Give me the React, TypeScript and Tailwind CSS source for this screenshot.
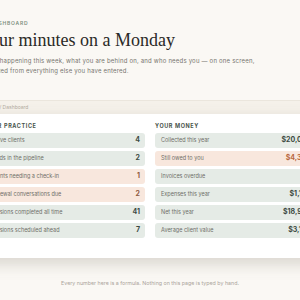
const practice = [
  { label: "Active clients", value: "4", warn: false },
  { label: "Leads in the pipeline", value: "2", warn: false },
  { label: "Clients needing a check-in", value: "1", warn: true },
  { label: "Renewal conversations due", value: "2", warn: true },
  { label: "Sessions completed all time", value: "41", warn: false },
  { label: "Sessions scheduled ahead", value: "7", warn: false },
];

const money = [
  { label: "Collected this year", value: "$20,050", warn: false },
  { label: "Still owed to you", value: "$4,300", warn: true },
  { label: "Invoices overdue", value: "0", warn: false },
  { label: "Expenses this year", value: "$1,120", warn: false },
  { label: "Net this year", value: "$18,930", warn: false },
  { label: "Average client value", value: "$3,150", warn: false },
];

type Item = { label: string; value: string; warn: boolean };

function StatRow({ item, money }: { item: Item; money?: boolean }) {
  return (
    <div
      className={`flex h-[15px] items-center justify-between rounded-[3px] pl-[6px] pr-[5px] ${
        item.warn ? "bg-[#f8e7dd]" : "bg-[#e5ebe6]"
      }`}
    >
      <span className="text-[5.5px] text-[#6f6f68]">{item.label}</span>
      <span
        className={`text-[7px] font-bold ${
          item.warn ? (money ? "text-[#b8683f]" : "text-[#8f5a3e]") : "text-[#3c4a42]"
        }`}
      >
        {item.value}
      </span>
    </div>
  );
}

function Column({ title, items, money }: { title: string; items: Item[]; money?: boolean }) {
  return (
    <div className="flex w-[161px] flex-col">
      <div className="mb-[3px] h-[8px] text-[5.5px] font-bold uppercase leading-[8px] tracking-[0.6px] text-[#48534c]">
        {title}
      </div>
      <div className="flex flex-col gap-[3px]">
        {items.map((it) => (
          <StatRow key={it.label} item={it} money={money} />
        ))}
      </div>
    </div>
  );
}

export default function App() {
  return (
    <div
      className="h-[300px] overflow-hidden bg-[#faf8f4]"
      style={{ fontFamily: "Inter, 'Liberation Sans', sans-serif" }}
    >
      <div className="flex justify-center">
        <div className="flex w-[420px] shrink-0 flex-col items-center">
          <div className="w-[336px] pt-[19px]">
            <div className="-ml-[4px] text-[5px] font-semibold uppercase leading-[8px] tracking-[0.8px] text-[#7d8f80]">
              My dashboard
            </div>
            <h1
              className="mt-[1px] -ml-[2px] text-[18px] leading-[24px] text-[#2a2a27]"
              style={{ fontFamily: "'Liberation Serif', serif" }}
            >
              Four minutes on a Monday
            </h1>
            <p className="mt-[4px] -ml-[5px] text-[6px] leading-[10px] tracking-[0.2px] text-[#77756f]">
              What's happening this week, what you are behind on, and who needs you — on one screen,
              <br />
              calculated from everything else you have entered.
            </p>
          </div>

          <div className="mt-[24px] w-full border-t border-[#ebe6dd] bg-[#f5f1ea]">
            <div className="mx-auto flex h-[13px] w-[336px] items-center">
              <span className="ml-[2px] text-[5px] text-[#b3aca1]">Home / Dashboard</span>
            </div>
          </div>

          <div className="w-full bg-white pb-[20px] pt-[8px] shadow-[0_6px_14px_rgba(120,110,95,0.25)]">
            <div className="mx-auto flex w-[332px] gap-[10px]">
              <Column title="Your practice" items={practice} />
              <Column title="Your money" items={money} money />
            </div>
          </div>

          <div className="mt-[22px] text-[5.3px] text-[#aaa49b]">
            Every number here is a formula. Nothing on this page is typed by hand.
          </div>
        </div>
      </div>
    </div>
  );
}
